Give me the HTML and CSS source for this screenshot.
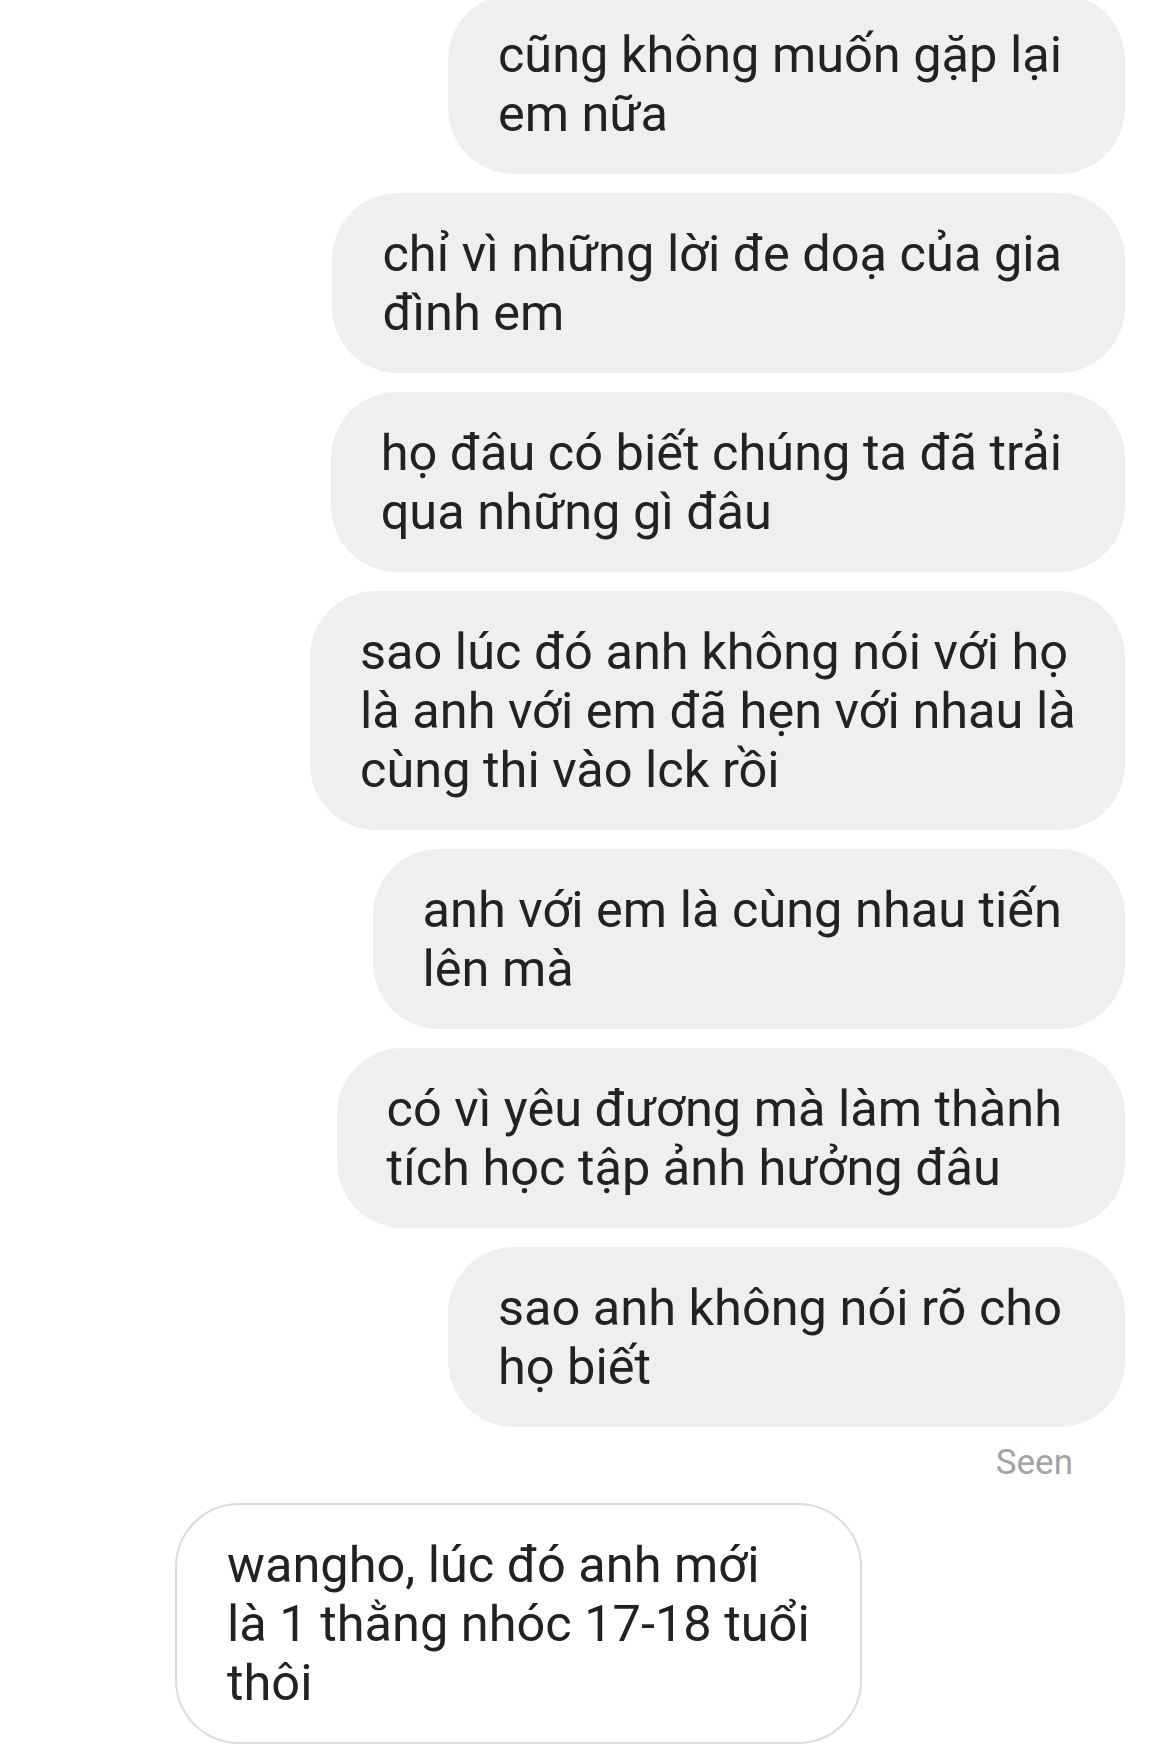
FILE: index.html
```html
<!DOCTYPE html>
<html lang="vi">
<head>
<meta charset="utf-8">
<title>Tin nhắn</title>
<link rel="stylesheet" href="styles.css">
</head>
<body>
<div class="thread">
  <div class="bubble out"><span class="line">cũng không muốn gặp lại</span><span class="line">em nữa</span></div>
  <div class="bubble out"><span class="line">chỉ vì những lời đe doạ của gia</span><span class="line">đình em</span></div>
  <div class="bubble out"><span class="line">họ đâu có biết chúng ta đã trải</span><span class="line">qua những gì đâu</span></div>
  <div class="bubble out"><span class="line">sao lúc đó anh không nói với họ</span><span class="line">là anh với em đã hẹn với nhau là</span><span class="line">cùng thi vào lck rồi</span></div>
  <div class="bubble out"><span class="line">anh với em là cùng nhau tiến</span><span class="line">lên mà</span></div>
  <div class="bubble out"><span class="line">có vì yêu đương mà làm thành</span><span class="line">tích học tập ảnh hưởng đâu</span></div>
  <div class="bubble out"><span class="line">sao anh không nói rõ cho</span><span class="line">họ biết</span></div>
  <div class="seen">Seen</div>
  <div class="bubble in"><span class="line">wangho, lúc đó anh mới</span><span class="line">là 1 thằng nhóc 17-18 tuổi</span><span class="line">thôi</span></div>
</div>
</body>
</html>
```

FILE: styles.css
```css
html, body {
  margin: 0;
  padding: 0;
  background: #ffffff;
}

body {
  width: 1170px;
  height: 1752px;
  overflow: hidden;
  font-family: Roboto, "Liberation Sans", "Noto Sans", sans-serif;
  color: #222222;
}

.thread {
  display: flex;
  flex-direction: column;
  align-items: flex-end;
  gap: 19px;
  margin-top: -6px;
  padding: 0 45px 0 175px;
}

.bubble {
  box-sizing: border-box;
  max-width: 815px;
  display: flex;
  flex-direction: column;
  padding: 31px 63px 31px 50px;
  border-radius: 66px;
  font-size: 50.5px;
  line-height: 59px;
}

.line {
  display: block;
  white-space: nowrap;
}

.out {
  background: #efefef;
}

.in {
  align-self: flex-start;
  background: #ffffff;
  border: 2px solid #dcdcdc;
  padding: 30px 50px 30px 50px;
  border-radius: 64px;
}

.seen {
  margin-top: -4px;
  padding-right: 52px;
  font-size: 35px;
  line-height: 42px;
  color: #a3a3a3;
}
```
